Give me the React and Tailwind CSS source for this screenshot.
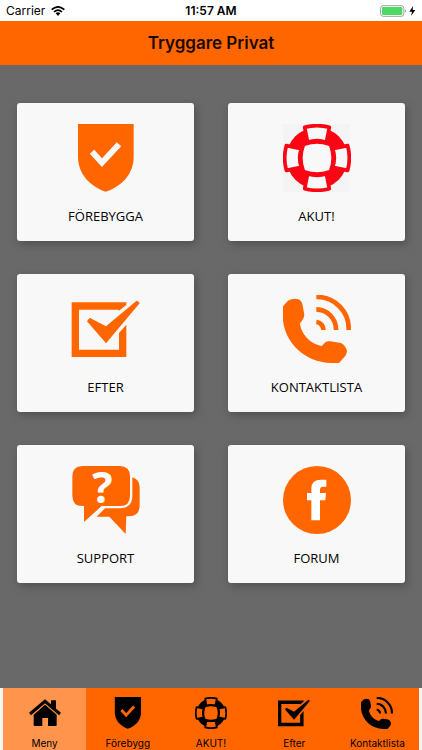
import React from "react";

function ShieldIcon({ className, viewBox = "186 87 204 204", check = "#f8f8f8" }) {
  return (
    <svg viewBox={viewBox} className={className} fill="currentColor" aria-hidden="true">
      <path d="M204 87H371V185C371 238 334 274 287 290C241 274 204 238 204 185Z" />
      <path d="M246 170L276 203L327 148" fill="none" stroke={check} strokeWidth="18" />
    </svg>
  );
}

function BuoySegment({ angle, fill }) {
  return (
    <path
      transform={`rotate(${angle} 290 189)`}
      d="M253 97Q290 87 327 97L318 142Q290 132 262 142Z"
      fill={fill}
      stroke="currentColor"
      strokeWidth="11"
      strokeLinejoin="round"
    />
  );
}

function BuoyIcon({ className, fill = "#f8f8f8", backdrop }) {
  return (
    <svg viewBox="188 87 204 204" className={className} aria-hidden="true">
      {backdrop && <rect x="188" y="87" width="200" height="204" fill={backdrop} />}
      <circle cx="290" cy="189" r="92" fill="currentColor" />
      <BuoySegment angle={0} fill={fill} />
      <BuoySegment angle={90} fill={fill} />
      <BuoySegment angle={180} fill={fill} />
      <BuoySegment angle={270} fill={fill} />
      <path
        d="M257 156Q290 144 323 156Q335 189 323 222Q290 234 257 222Q245 189 257 156Z"
        fill={fill}
        stroke={fill}
        strokeWidth="8"
        strokeLinejoin="round"
      />
    </svg>
  );
}

function CheckboxIcon({ className }) {
  return (
    <svg viewBox="186 87 204 204" className={className} fill="currentColor" aria-hidden="true">
      <path d="M185 109H349V117L326 135V131H207V251H327V201L349 176V273H185Z" />
      <path d="M231 166L238 157Q241 155 246 159L288 181L378 106Q381 103 384 106L389 112L288 232Z" />
    </svg>
  );
}

function PhoneIcon({ className, viewBox = "188 87 204 204" }) {
  return (
    <svg viewBox={viewBox} className={className} fill="currentColor" aria-hidden="true">
      <path d="M187 122L203 104Q220 94 238 101Q244 105 247 118L252 146Q251 158 239 172C241 202 270 235 304 240L315 229Q320 225 330 226L362 231Q377 239 380 256Q379 268 370 275L356 291H333C244 289 187 219 187 148Z" />
      <path
        d="M288 93A95 95 0 0 1 385 192M288 130A60 60 0 0 1 347 192M288 168A23 23 0 0 1 309 192"
        fill="none"
        stroke="currentColor"
        strokeWidth="14"
      />
    </svg>
  );
}

function SupportIcon({ className }) {
  return (
    <svg viewBox="186 87 204 204" className={className} fill="currentColor" aria-hidden="true">
      <path d="M217 87H330Q360 88 360 118V176Q360 207 330 207H275L222 255V207H217Q187 207 187 176V118Q187 88 217 87Z" />
      <path d="M367 121Q389 127 389 153V205Q389 237 357 238H349L347 291L298 239H260L285 214H330Q367 212 367 176Z" />
      <text
        x="277"
        y="197"
        textAnchor="middle"
        fill="#ffffff"
        className="font-['Open_Sans',sans-serif] text-[128px] font-bold"
      >
        ?
      </text>
    </svg>
  );
}

function ForumIcon({ className }) {
  return (
    <svg viewBox="188 87 204 204" className={className} aria-hidden="true">
      <circle cx="290" cy="189" r="102" fill="currentColor" />
      <path
        d="M273 250V190H260V168H273V155Q273 128 302 128H318V149H307Q299 149 299 158V168H317L315 190H299V250Z"
        fill="#ffffff"
      />
    </svg>
  );
}

function HomeIcon({ className }) {
  return (
    <svg viewBox="0 0 96 96" className={className} fill="currentColor" aria-hidden="true">
      <path d="M48 23L83 53V84Q83 87 80 87H57V63H40V87H17Q14 87 14 84V53Z" />
      <path d="M3 51L48 13L93 51" fill="none" stroke="currentColor" strokeWidth="9" />
      <path d="M66 10H81V38L66 26Z" />
    </svg>
  );
}

function WifiIcon() {
  return (
    <svg viewBox="0 0 42 30" className="h-[10px] w-[14px]" aria-hidden="true">
      <path d="M2 11Q21-6 40 11M9 18Q21 7 33 18" fill="none" stroke="currentColor" strokeWidth="5" />
      <path d="M14 22Q21 16 28 22L21 30Z" fill="currentColor" />
    </svg>
  );
}

function BatteryIcon() {
  return (
    <svg viewBox="0 0 108 36" className="h-[12px] w-[36px]" aria-label="Charging">
      <rect x="1.5" y="2" width="70" height="32" rx="8" fill="none" stroke="#a3a3a3" strokeWidth="3" />
      <rect x="6" y="6" width="61" height="24" rx="4" fill="#4cd964" />
      <path d="M75 12Q81 18 75 24Z" fill="#a3a3a3" />
      <path d="M99 3L88 20H96L93 33L106 15H98Z" fill="#000000" />
    </svg>
  );
}

const cards = [
  { label: "FÖREBYGGA", icon: <ShieldIcon className="size-[68px]" /> },
  { label: "AKUT!", icon: <BuoyIcon className="size-[68px] text-[#fb0515]" backdrop="#f4f4f4" /> },
  { label: "EFTER", icon: <CheckboxIcon className="size-[68px] overflow-visible" /> },
  { label: "KONTAKTLISTA", icon: <PhoneIcon className="size-[68px]" /> },
  { label: "SUPPORT", icon: <SupportIcon className="size-[68px] overflow-visible" /> },
  { label: "FORUM", icon: <ForumIcon className="size-[68px]" /> },
];

const tabs = [
  { label: "Meny", icon: <HomeIcon className="size-8" />, active: true },
  { label: "Förebygg", icon: <ShieldIcon className="size-8" check="#ff6600" /> },
  { label: "AKUT!", icon: <BuoyIcon className="size-8" fill="#ff6600" /> },
  { label: "Efter", icon: <CheckboxIcon className="size-8" /> },
  { label: "Kontaktlista", icon: <PhoneIcon className="size-8" /> },
];

export default function App() {
  return (
    <div className="flex min-h-screen flex-col bg-[#696969] font-['Inter',sans-serif] text-black">
      <div className="grid h-[21px] grid-cols-3 items-center bg-white px-1.5 text-xs">
        <div className="flex items-center gap-1.5">
          <span>Carrier</span>
          <WifiIcon />
        </div>
        <span className="text-center font-semibold">11:57 AM</span>
        <div className="flex justify-end">
          <BatteryIcon />
        </div>
      </div>

      <header className="flex h-11 items-center justify-center bg-[#ff6600]">
        <h1 className="text-[17px] leading-6 font-semibold text-[#1a0a00]">Tryggare Privat</h1>
      </header>

      <main className="grid flex-1 grid-cols-2 content-start gap-x-[34px] gap-y-[33px] px-[17px] pt-[38px] pb-8">
        {cards.map((card) => (
          <button
            key={card.label}
            type="button"
            className="flex h-[138px] flex-col items-center rounded-[3px] bg-[#f8f8f8] pt-[21px] text-[#ff6600] shadow-[2px_3px_9px_rgba(0,0,0,0.25)]"
          >
            {card.icon}
            <span className="mt-[14px] font-['Open_Sans',sans-serif] text-[13px] leading-5 text-black">
              {card.label}
            </span>
          </button>
        ))}
      </main>

      <nav className="flex h-[62px] bg-[#f4f4f4] px-[3px]">
        {tabs.map((tab) => (
          <button
            key={tab.label}
            type="button"
            aria-current={tab.active ? "page" : undefined}
            className={`flex flex-1 basis-0 flex-col items-center pt-[9px] ${
              tab.active ? "bg-[#ff944d]" : "bg-[#ff6600]"
            }`}
          >
            {tab.icon}
            <span className="mt-2 text-[10px] leading-3">{tab.label}</span>
          </button>
        ))}
      </nav>
    </div>
  );
}
